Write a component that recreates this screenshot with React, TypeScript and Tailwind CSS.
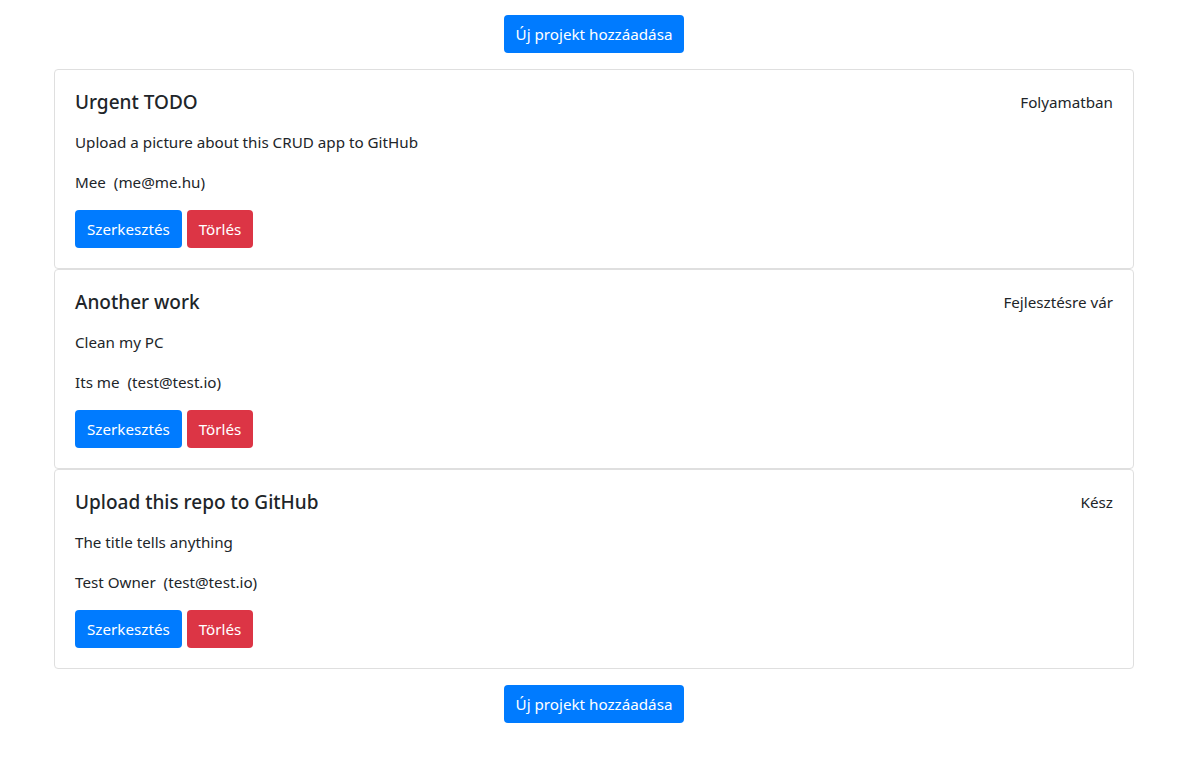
import React from "react";

const projects = [
  { title: "Urgent TODO", status: "Folyamatban", desc: "Upload a picture about this CRUD app to GitHub", owner: "Mee", email: "me@me.hu" },
  { title: "Another work", status: "Fejlesztésre vár", desc: "Clean my PC", owner: "Its me", email: "test@test.io" },
  { title: "Upload this repo to GitHub", status: "Kész", desc: "The title tells anything", owner: "Test Owner", email: "test@test.io" },
];

function AddButton() {
  return (
    <div className="flex justify-center">
      <button className="h-[38px] px-3 rounded bg-[#007bff] text-white text-[15.2px] leading-6">
        Új projekt hozzáadása
      </button>
    </div>
  );
}

export default function App() {
  return (
    <div
      className="min-h-[763px] bg-white text-[#212529] pt-[15px]"
      style={{ fontFamily: '"Noto Sans", "Open Sans", sans-serif' }}
    >
      <div className="w-[1080px] ml-[54px] flex flex-col">
        <AddButton />
        <div className="mt-4 mb-4 flex flex-col">
          {projects.map((p) => (
            <div key={p.title} className="border border-[#dfdfdf] rounded p-5 flex flex-col">
              <div className="flex justify-between items-start mb-4">
                <h5 className="text-[19px] leading-6 font-medium">{p.title}</h5>
                <span className="text-[15.2px] leading-6">{p.status}</span>
              </div>
              <p className="text-[15.2px] leading-6 mb-4">{p.desc}</p>
              <p className="text-[15.2px] leading-6 mb-4">
                {p.owner}&nbsp; ({p.email})
              </p>
              <div className="flex gap-[5px]">
                <button className="h-[38px] px-3 rounded bg-[#007bff] text-white text-[15.2px] leading-6">Szerkesztés</button>
                <button className="h-[38px] px-3 rounded bg-[#dc3545] text-white text-[15.2px] leading-6">Törlés</button>
              </div>
            </div>
          ))}
        </div>
        <AddButton />
      </div>
    </div>
  );
}
